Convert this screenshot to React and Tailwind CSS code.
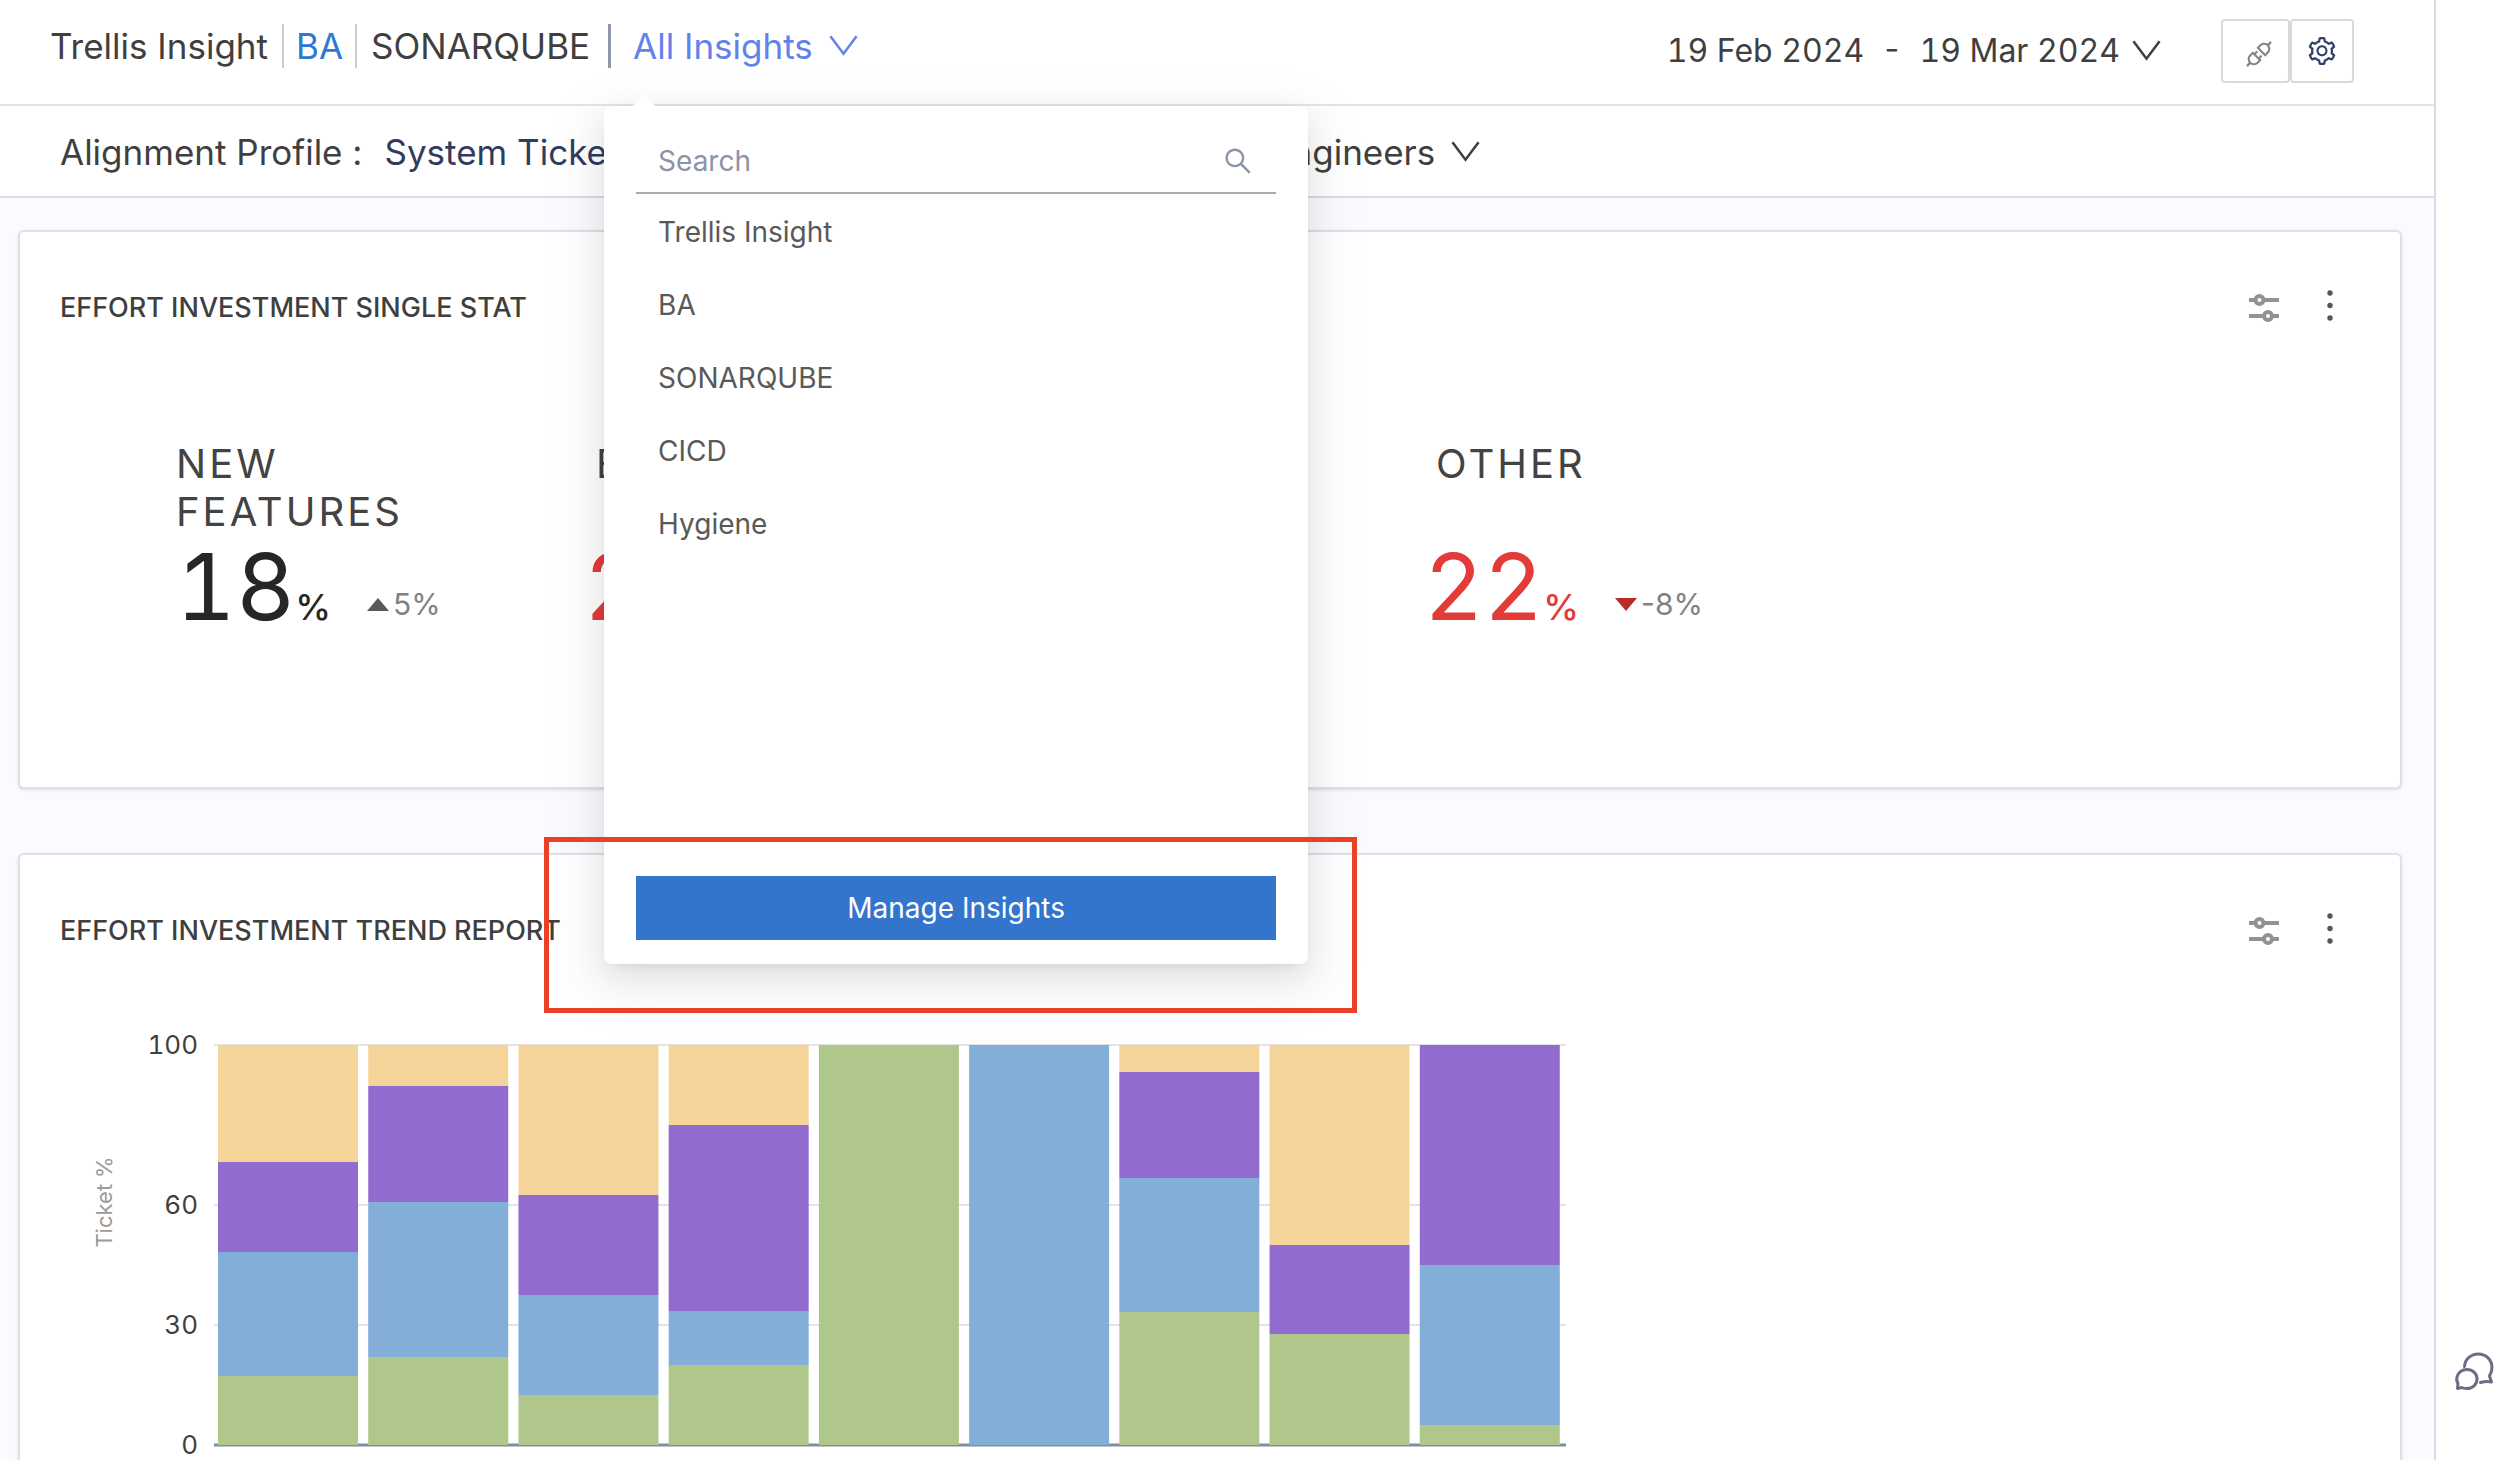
import React from "react";
import { AiOutlineApi, AiOutlineSearch, AiOutlineSetting } from "react-icons/ai";

const INSIGHTS = ["Trellis Insight", "BA", "SONARQUBE", "CICD", "Hygiene"];

const STATS = [
  { label: "New Features", value: "18", delta: "5%", up: true },
  { label: "Bugs", value: "20", delta: "", up: false },
  null,
  { label: "Other", value: "22", delta: "-8%", up: false },
  null,
];

// Segments run from the top of each bar to its foot, in quarters of a percent.
const COLORS = ["#f5d499", "#926bcf", "#83aed8", "#afc78b"];
const BARS = [
  [117, 90, 124, 69],
  [41, 116, 155, 88],
  [150, 100, 100, 50],
  [80, 186, 54, 80],
  [0, 0, 0, 400],
  [0, 0, 400, 0],
  [27, 106, 134, 133],
  [200, 89, 0, 111],
  [0, 220, 160, 20],
];

function Chevron({ className }) {
  return (
    <svg className={className} width="29" height="22" viewBox="0 0 30 22" fill="none" stroke="currentColor" strokeWidth="2.6" aria-hidden="true">
      <path d="M1.5 1 L15 19 L28.5 1" />
    </svg>
  );
}

function ChatIcon() {
  return (
    <svg width="40" height="40" viewBox="0 0 40 40" fill="none" stroke="#6b6d85" strokeWidth="3" strokeLinecap="round" strokeLinejoin="round" aria-hidden="true">
      <path d="M10.500 15.500 C11 8 17 3 24.500 3 C32.500 3 38 9.500 38 16.500 C38 20 37 22.500 35.500 25 L37.500 31 C33.500 30 30 30.500 26.500 31.500" />
      <path d="M3.500 37.500 L4 32.500 C2.500 30.500 2.500 28 3 26 C4.500 21 8.500 18.500 13 18.500 C18.500 18.500 23 22.500 23 28 C23 33.500 18.500 37.500 13 37.500 C11 37.500 9 37.200 7.500 36.500 Z" />
    </svg>
  );
}

function CardActions() {
  return (
    <div className="flex items-center gap-9">
      <button type="button" aria-label="Filters">
        <svg width="30" height="28" viewBox="0 0 30 28" fill="none" stroke="#929292" strokeWidth="4" aria-hidden="true">
          <path d="M0 6 H6 M15 6 H30 M0 22 H14 M23 22 H30" />
          <circle cx="10.500" cy="6" r="4" />
          <circle cx="19" cy="22" r="4" />
        </svg>
      </button>
      <button type="button" aria-label="More options" className="flex h-10 w-[30px] items-start justify-center pt-0.5">
        <svg width="8" height="32" viewBox="0 0 8 32" fill="#555" aria-hidden="true">
          <circle cx="4" cy="3" r="2.700" />
          <circle cx="4" cy="15.500" r="2.700" />
          <circle cx="4" cy="28" r="2.700" />
        </svg>
      </button>
    </div>
  );
}

function Card({ title, className, children }) {
  return (
    <section className={"rounded-md border-2 border-[#dfe0e8] bg-white shadow-sm " + className}>
      <div className="flex items-center justify-between pt-14 pr-[55px] pl-10">
        <h2 className="text-[27px] leading-10 font-medium text-[#3f3f3f]">{title}</h2>
        <CardActions />
      </div>
      {children}
    </section>
  );
}

function Stat({ stat }) {
  const color = stat.up ? "text-[#262626]" : "text-[#e23b39]";
  return (
    <div>
      <p className="h-24 max-w-[300px] text-[40px] leading-[48px] tracking-[3px] text-[#434343] uppercase">{stat.label}</p>
      <div className={"flex items-baseline " + (stat.up ? "" : "-ml-3")}>
        <span className={"text-[92px] leading-[102px] tabular-nums " + color}>{stat.value}</span>
        <span className={"text-4xl font-medium " + color}>%</span>
        <span className="mb-3.5 ml-9 flex items-center gap-1 self-end text-[30px] leading-10 text-[#828282]">
          <svg width="22" height="13" viewBox="0 0 22 13" aria-hidden="true">
            {stat.up ? <path d="M0 13 L11 0 L22 13 Z" fill="#595959" /> : <path d="M0 0 L22 0 L11 13 Z" fill="#b92b29" />}
          </svg>
          {stat.delta}
        </span>
      </div>
    </div>
  );
}

function TrendChart() {
  const top = 25;
  const left = 140;
  const width = 1352;
  const step = width / BARS.length;
  const lines = [100, 60, 30, 0];
  return (
    <svg className="tabular-nums" width="1500" height="480" viewBox="0 0 1500 480" role="img" aria-label="Ticket % trend">
      {lines.map((v) => {
        const y = top + (100 - v) * 4;
        return (
          <g key={v}>
            <path d={`M${left} ${y} H${left + width}`} stroke={v ? "#e3e3e5" : "#858c9f"} strokeWidth={v ? 2 : 3} />
            <text x="124" y={y + 9} textAnchor="end" fontSize="26" fill="#3f3f3f">{v}</text>
          </g>
        );
      })}
      {BARS.map((bar, i) => {
        let y = top;
        return bar.map((h, j) => {
          const rectY = y;
          y += h;
          return h ? <rect key={i + "-" + j} x={left + i * step + 4} y={rectY} width="140" height={h} fill={COLORS[j]} /> : null;
        });
      })}
      <text transform="translate(38 182) rotate(-90)" textAnchor="middle" fontSize="22" fill="#9a9a9a">Ticket %</text>
    </svg>
  );
}

function InsightsMenu() {
  return (
    <div className="absolute top-[82px] -left-[29px] z-10 w-[704px] rounded-lg bg-white px-8 pt-5 pb-6 font-normal shadow-[0_6px_12px_-8px_rgba(0,0,0,0.12),0_12px_32px_rgba(0,0,0,0.08),0_18px_56px_16px_rgba(0,0,0,0.05)]">
      <div className="absolute -top-[8px] left-8 size-4 rotate-45 bg-white" />
      <div className="flex h-[68px] items-center border-b-2 border-[#ababab] px-[22px] pt-1">
        <input aria-label="Search insights" placeholder="Search" className="min-w-0 flex-1 bg-transparent text-[28px] leading-10 outline-none placeholder:text-[#8c93a6]" />
        <AiOutlineSearch className="size-8 text-[#8c93a6]" />
      </div>
      <ul className="flex h-[682px] flex-col gap-[29px] pt-4 text-[#595959]">
        {INSIGHTS.map((name) => (
          <li key={name} className="flex">
            <a href="#" className="px-[22px] text-[28px] leading-11">{name}</a>
          </li>
        ))}
      </ul>
      <button type="button" className="h-16 w-full bg-[#3375cd] text-[28px] text-white">Manage Insights</button>
      <div className="pointer-events-none absolute -right-[49px] -bottom-[49px] -left-[60px] h-[176px] border-[5px] border-[#ea4025]" />
    </div>
  );
}

export default function App() {
  return (
    <div className="flex h-screen overflow-hidden bg-white font-['Inter',sans-serif] text-[#3f3f3f]">
      <main className="flex min-w-0 flex-1 flex-col">
        <header className="flex h-[106px] shrink-0 items-start justify-between border-b-2 border-[#e4e4e4] pr-20 pl-[50px]">
          <nav className="flex items-center pt-6 text-[35px] leading-11">
            <a href="#" className="border-r-2 border-[#cccccc] pr-3.5">Trellis Insight</a>
            <a href="#" className="border-r-2 border-[#cccccc] px-3 text-[#2c78d4]">BA</a>
            <a href="#" className="pr-[18px] pl-3.5">SONARQUBE</a>
            <div className="h-11 w-[3px] bg-[#9097ab]" />
            <div className="relative ml-[22px]">
              <button type="button" className="flex items-center gap-4 text-[#6282ea]">
                All Insights
                <Chevron />
              </button>
              <InsightsMenu />
            </div>
          </nav>
          <div className="flex items-center pt-[19px]">
            <button type="button" className="flex items-center gap-3 text-[32px] leading-11 whitespace-pre tabular-nums">
              19 Feb 2024  -  19 Mar 2024
              <Chevron />
            </button>
            <div className="ml-[60px] flex">
              <button type="button" aria-label="Integrations" className="flex h-16 w-[69px] items-center justify-center rounded-sm border-2 border-[#d9d9d9] pt-1.5 pl-1.5">
                <AiOutlineApi className="size-8 text-[#858585]" />
              </button>
              <button type="button" aria-label="Settings" className="flex h-16 w-16 items-center justify-center rounded-sm border-2 border-[#d9d9d9]">
                <AiOutlineSetting className="size-8 text-[#2f3f66]" />
              </button>
            </div>
          </div>
        </header>

        <div className="flex h-[92px] shrink-0 items-center border-b-2 border-[#d9dae6] pt-0.5 pl-[60px] text-[35px] leading-11">
          <span>Alignment Profile :</span>
          <a href="#" className="ml-[22px] w-[886px] text-[#2f3b60]">System Ticket</a>
          <button type="button" className="flex items-center gap-4">
            Engineers
            <Chevron />
          </button>
        </div>

        <div className="flex-1 overflow-hidden bg-[#fafbff] pt-8 pr-8 pl-[18px]">
          <Card title="EFFORT INVESTMENT SINGLE STAT" className="h-[559px]">
            <div className="grid grid-cols-5 pt-28 pr-[124px] pl-[156px]">
              {STATS.map((stat, i) => (stat ? <Stat key={i} stat={stat} /> : <div key={i} />))}
            </div>
          </Card>
          <Card title="EFFORT INVESTMENT TREND REPORT" className="mt-16 pb-16">
            <div className="pt-[69px] pl-[54px]">
              <TrendChart />
            </div>
          </Card>
        </div>
      </main>

      <aside className="flex w-[74px] flex-col items-center justify-end border-l-2 border-[#d9dae6] pb-[69px] pl-1">
        <button type="button" aria-label="Chat">
          <ChatIcon />
        </button>
      </aside>
    </div>
  );
}
